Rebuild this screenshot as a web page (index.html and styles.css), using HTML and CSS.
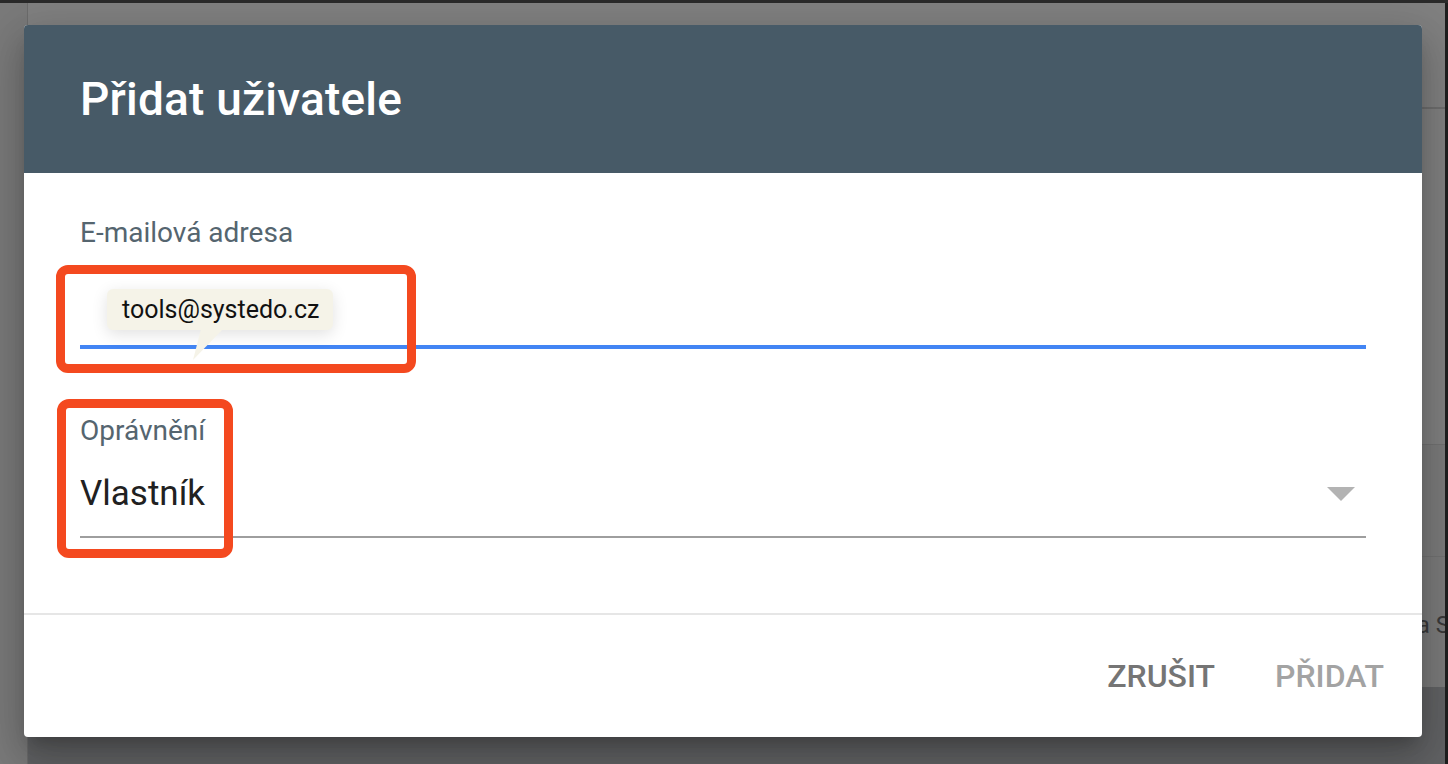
FILE: index.html
```html
<!DOCTYPE html>
<html lang="cs">
<head>
<meta charset="utf-8">
<title>Přidat uživatele</title>
<link rel="stylesheet" href="styles.css">
</head>
<body>
<div class="topbar"></div>
<div class="page">
  <div class="rail"></div>
  <div class="content">
    <div class="row row-head"></div>
    <div class="row row-a"></div>
    <div class="row row-b"></div>
    <div class="row row-c"><span class="bg-text">a S</span></div>
    <div class="row row-foot"></div>
  </div>
  <div class="scrollbar"></div>
</div>

<div class="dialog">
  <div class="dialog-header">
    <h1 class="dialog-title">Přidat uživatele</h1>
  </div>
  <div class="dialog-body">
    <div class="field field-email">
      <label class="field-label">E-mailová adresa</label>
      <div class="field-input"></div>
      <div class="tooltip">tools@systedo.cz</div>
      <svg class="tooltip-tail" width="32" height="32" viewBox="0 0 32 32"><polygon points="8,0 30,0 0,31" fill="#f5f3e8"/></svg>
    </div>
    <div class="field field-select">
      <label class="field-label">Oprávnění</label>
      <div class="select">
        <span class="select-value">Vlastník</span>
        <span class="select-arrow"></span>
      </div>
    </div>
  </div>
  <div class="dialog-footer">
    <button class="btn btn-cancel">ZRUŠIT</button>
    <button class="btn btn-add">PŘIDAT</button>
  </div>
  <div class="mark mark-email"></div>
  <div class="mark mark-select"></div>
</div>
</body>
</html>
```

FILE: styles.css
```css
html, body {
  margin: 0;
  padding: 0;
}
body {
  width: 1448px;
  height: 764px;
  overflow: hidden;
  background: #808080;
  font-family: Roboto, "Noto Sans", sans-serif;
}
.topbar {
  height: 3px;
  background: #2a2a2a;
}
.page {
  display: flex;
  height: 761px;
}
.rail {
  width: 27px;
  background: #7a7a7a;
  border-right: 1px solid #6c6c6c;
}
.content {
  flex: 1;
  display: flex;
  flex-direction: column;
  overflow: hidden;
}
.row-head {
  height: 104px;
  border-bottom: 2px solid #6e6e6e;
}
.row-a {
  height: 335px;
  border-bottom: 1px solid #727272;
}
.row-b {
  height: 111px;
  border-bottom: 1px solid #727272;
  background: #7b7b7b;
}
.row-c {
  height: 130px;
  background: #7b7b7b;
  display: flex;
  justify-content: flex-end;
  padding-top: 52px;
  box-sizing: border-box;
}
.bg-text {
  font-family: Roboto, sans-serif;
  font-size: 24px;
  color: #3a3a3a;
  white-space: nowrap;
  line-height: 32px;
  margin-right: -5px;
}
.row-foot {
  flex: 1;
  background: #616264;
}
.scrollbar {
  width: 3px;
  background: #1f1f1f;
  position: relative;
}

/* Dialog (overlay) */
.dialog {
  position: absolute;
  left: 24px;
  top: 25px;
  width: 1398px;
  height: 712px;
  background: #fff;
  border-radius: 4px;
  box-shadow: 0 11px 15px -7px rgba(0,0,0,.2), 0 24px 38px 3px rgba(0,0,0,.14), 0 9px 46px 8px rgba(0,0,0,.12);
  display: flex;
  flex-direction: column;
}
.dialog-header {
  height: 148px;
  background: #475a67;
  border-radius: 4px 4px 0 0;
  display: flex;
  align-items: center;
  padding-left: 56px;
}
.dialog-title {
  margin: 0;
  font-size: 46px;
  font-weight: 500;
  color: #fff;
  line-height: 1;
  letter-spacing: 0.2px;
}
.dialog-body {
  padding: 44px 56px 75px;
  border-bottom: 2px solid #e6e6e6;
}
.field {
  position: relative;
  display: flex;
  flex-direction: column;
}
.field-label {
  font-size: 28px;
  line-height: 32px;
  color: #55656f;
}
.field-input {
  height: 96px;
  border-bottom: 4px solid #4285f4;
}
.tooltip {
  position: absolute;
  left: 27px;
  top: 72px;
  height: 41px;
  width: 226px;
  box-sizing: border-box;
  padding-left: 15px;
  background: #f5f3e8;
  border-radius: 6px;
  font-size: 25px;
  line-height: 41px;
  color: #111;
  box-shadow: 0 4px 16px rgba(0,0,0,.12);
}
.tooltip-tail {
  position: absolute;
  left: 113px;
  top: 112px;
}
.field-select {
  margin-top: 66px;
}
.select {
  display: flex;
  justify-content: space-between;
  align-items: flex-start;
  margin-top: 27px;
  padding-bottom: 22px;
  border-bottom: 2px solid #9e9e9e;
}
.select-value {
  font-size: 35px;
  line-height: 40px;
  color: #212121;
}
.select-arrow {
  width: 0;
  height: 0;
  margin-top: 13px;
  margin-right: 11px;
  border-left: 14px solid transparent;
  border-right: 14px solid transparent;
  border-top: 14px solid #b3b3b3;
}
.dialog-footer {
  flex: 1;
  display: flex;
  justify-content: flex-end;
  align-items: center;
  gap: 28px;
  padding-right: 22px;
}
.btn {
  border: 0;
  background: none;
  padding: 0 16px;
  font-family: Roboto, sans-serif;
  font-size: 32px;
  font-weight: 500;
  line-height: 40px;
}
.btn-cancel { color: #757575; }
.btn-add { color: #a3a3a3; }

/* Annotation marks */
.mark {
  position: absolute;
  border: 9px solid #f4491f;
  border-radius: 12px;
  box-sizing: border-box;
}
.mark-email {
  left: 32px;
  top: 240px;
  width: 360px;
  height: 108px;
}
.mark-select {
  left: 33px;
  top: 374px;
  width: 176px;
  height: 159px;
}
```
